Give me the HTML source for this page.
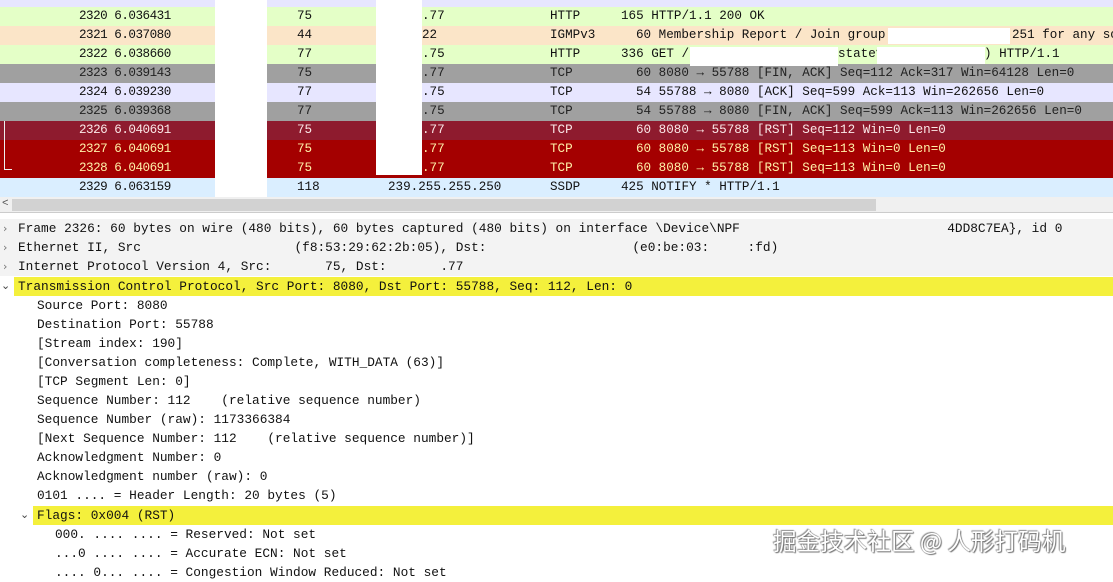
<!DOCTYPE html>
<html><head><meta charset="utf-8"><style>
body{margin:0;width:1113px;height:573px;overflow:hidden;background:#fff;position:relative;font-family:"Liberation Mono",monospace;font-size:12.6px;color:#111}
.r{position:absolute;left:0;width:1113px;height:19px;line-height:19px;white-space:pre}
.r span{position:absolute;top:0}
.w{position:absolute;background:#fff}
.d{position:absolute;height:19px;line-height:19px;white-space:pre;font-size:12.8px}
.ar{position:absolute;font-size:11px;color:#777;font-family:"DejaVu Sans",sans-serif}
.n{width:91px;text-align:right;letter-spacing:-0.5px}
</style></head><body>
<div class="r" style="top:-12px;background:#e7e6ff"><span style="left:79px">2319 6.0</span></div>
<div class="r" style="top:7px;background:#e4ffc7"><span class="n" style="left:79px">2320 6.036431</span><span style="left:297px">75</span><span style="left:422px">.77</span><span style="left:550px">HTTP</span><span style="left:621px">165 HTTP/1.1 200 OK</span></div>
<div class="r" style="top:26px;background:#fbe5c8"><span class="n" style="left:79px">2321 6.037080</span><span style="left:297px">44</span><span style="left:422px">22</span><span style="left:550px">IGMPv3</span><span style="left:636px">60 Membership Report / Join group</span><span style="left:1012px">251 for any source</span></div>
<div class="r" style="top:45px;background:#e4ffc7"><span class="n" style="left:79px">2322 6.038660</span><span style="left:297px">77</span><span style="left:422px">.75</span><span style="left:550px">HTTP</span><span style="left:621px">336 GET /</span><span style="left:838px">state?</span><span style="left:984px">) HTTP/1.1</span></div>
<div class="r" style="top:64px;background:#a0a0a0;color:#222"><span class="n" style="left:79px">2323 6.039143</span><span style="left:297px">75</span><span style="left:422px">.77</span><span style="left:550px">TCP</span><span style="left:636px">60 8080 → 55788 [FIN, ACK] Seq=112 Ack=317 Win=64128 Len=0</span></div>
<div class="r" style="top:83px;background:#e7e6ff"><span class="n" style="left:79px">2324 6.039230</span><span style="left:297px">77</span><span style="left:422px">.75</span><span style="left:550px">TCP</span><span style="left:636px">54 55788 → 8080 [ACK] Seq=599 Ack=113 Win=262656 Len=0</span></div>
<div class="r" style="top:102px;background:#a0a0a0;color:#222"><span class="n" style="left:79px">2325 6.039368</span><span style="left:297px">77</span><span style="left:422px">.75</span><span style="left:550px">TCP</span><span style="left:636px">54 55788 → 8080 [FIN, ACK] Seq=599 Ack=113 Win=262656 Len=0</span></div>
<div class="r" style="top:121px;background:#8e1b2e;color:#fbe8e8"><span class="n" style="left:79px">2326 6.040691</span><span style="left:297px">75</span><span style="left:422px">.77</span><span style="left:550px">TCP</span><span style="left:636px">60 8080 → 55788 [RST] Seq=112 Win=0 Len=0</span></div>
<div class="r" style="top:140px;background:#a40000;color:#fff0a8"><span class="n" style="left:79px">2327 6.040691</span><span style="left:297px">75</span><span style="left:422px">.77</span><span style="left:550px">TCP</span><span style="left:636px">60 8080 → 55788 [RST] Seq=113 Win=0 Len=0</span></div>
<div class="r" style="top:159px;background:#a40000;color:#fff0a8"><span class="n" style="left:79px">2328 6.040691</span><span style="left:297px">75</span><span style="left:422px">.77</span><span style="left:550px">TCP</span><span style="left:636px">60 8080 → 55788 [RST] Seq=113 Win=0 Len=0</span></div>
<div class="r" style="top:178px;background:#daeeff"><span class="n" style="left:79px">2329 6.063159</span><span style="left:297px">118</span><span style="left:388px">239.255.255.250</span><span style="left:550px">SSDP</span><span style="left:621px">425 NOTIFY * HTTP/1.1</span></div>
<div style="position:absolute;left:4px;top:121px;width:1px;height:48px;background:#eee"></div>
<div style="position:absolute;left:4px;top:169px;width:8px;height:1px;background:#eee"></div>
<div class="w" style="left:215px;top:0;width:52px;height:197px"></div>
<div class="w" style="left:376px;top:0;width:46px;height:175px"></div>
<div class="w" style="left:888px;top:28px;width:122px;height:16px"></div>
<div class="w" style="left:690px;top:47px;width:148px;height:19px"></div>
<div class="w" style="left:877px;top:47px;width:108px;height:17px"></div>
<div style="position:absolute;left:0;top:197px;width:1113px;height:15px;background:#f0f0f0"></div>
<div style="position:absolute;left:12px;top:199px;width:864px;height:12px;background:#d2d2d2"></div>
<div style="position:absolute;left:2px;top:197px;font-size:11px;color:#555;line-height:15px">&lt;</div>
<div style="position:absolute;left:0;top:212px;width:1113px;height:6px;background:#fff;border-top:1px solid #ccc;border-bottom:1px solid #999"></div>
<div style="position:absolute;left:0;top:219px;width:1113px;height:57px;background:#f3f3f3"></div>
<div style="position:absolute;left:14px;top:277px;width:1099px;height:19px;background:#f4f03c"></div>
<div style="position:absolute;left:33px;top:506px;width:1080px;height:19px;background:#f4f03c"></div>
<span class="ar" style="left:3px;top:222px">›</span>
<span class="ar" style="left:3px;top:241px">›</span>
<span class="ar" style="left:3px;top:260px">›</span>
<span class="ar" style="left:1px;top:279px;color:#444">⌄</span>
<span class="ar" style="left:20px;top:508px;color:#444">⌄</span>
<div class="d" style="left:18px;top:219px">Frame 2326: 60 bytes on wire (480 bits), 60 bytes captured (480 bits) on interface \Device\NPF                           4DD8C7EA}, id 0</div>
<div class="d" style="left:18px;top:238px">Ethernet II, Src                    (f8:53:29:62:2b:05), Dst:                   (e0:be:03:     :fd)</div>
<div class="d" style="left:18px;top:257px">Internet Protocol Version 4, Src:       75, Dst:       .77</div>
<div class="d" style="left:18px;top:277px">Transmission Control Protocol, Src Port: 8080, Dst Port: 55788, Seq: 112, Len: 0</div>
<div class="d" style="left:37px;top:296px">Source Port: 8080</div>
<div class="d" style="left:37px;top:315px">Destination Port: 55788</div>
<div class="d" style="left:37px;top:334px">[Stream index: 190]</div>
<div class="d" style="left:37px;top:353px">[Conversation completeness: Complete, WITH_DATA (63)]</div>
<div class="d" style="left:37px;top:372px">[TCP Segment Len: 0]</div>
<div class="d" style="left:37px;top:391px">Sequence Number: 112    (relative sequence number)</div>
<div class="d" style="left:37px;top:410px">Sequence Number (raw): 1173366384</div>
<div class="d" style="left:37px;top:429px">[Next Sequence Number: 112    (relative sequence number)]</div>
<div class="d" style="left:37px;top:448px">Acknowledgment Number: 0</div>
<div class="d" style="left:37px;top:467px">Acknowledgment number (raw): 0</div>
<div class="d" style="left:37px;top:486px">0101 .... = Header Length: 20 bytes (5)</div>
<div class="d" style="left:37px;top:506px">Flags: 0x004 (RST)</div>
<div class="d" style="left:55px;top:525px">000. .... .... = Reserved: Not set</div>
<div class="d" style="left:55px;top:544px">...0 .... .... = Accurate ECN: Not set</div>
<div class="d" style="left:55px;top:563px">.... 0... .... = Congestion Window Reduced: Not set</div>
<div style="position:absolute;left:773px;top:525px;font-family:'Noto Sans CJK SC',sans-serif;font-size:23.6px;line-height:30px;color:#fff;text-shadow:0 0 1px #555,1px 1px 1px #777,-1px -1px 1px #999;white-space:nowrap">掘金技术社区 @ 人形打码机</div>
</body></html>
